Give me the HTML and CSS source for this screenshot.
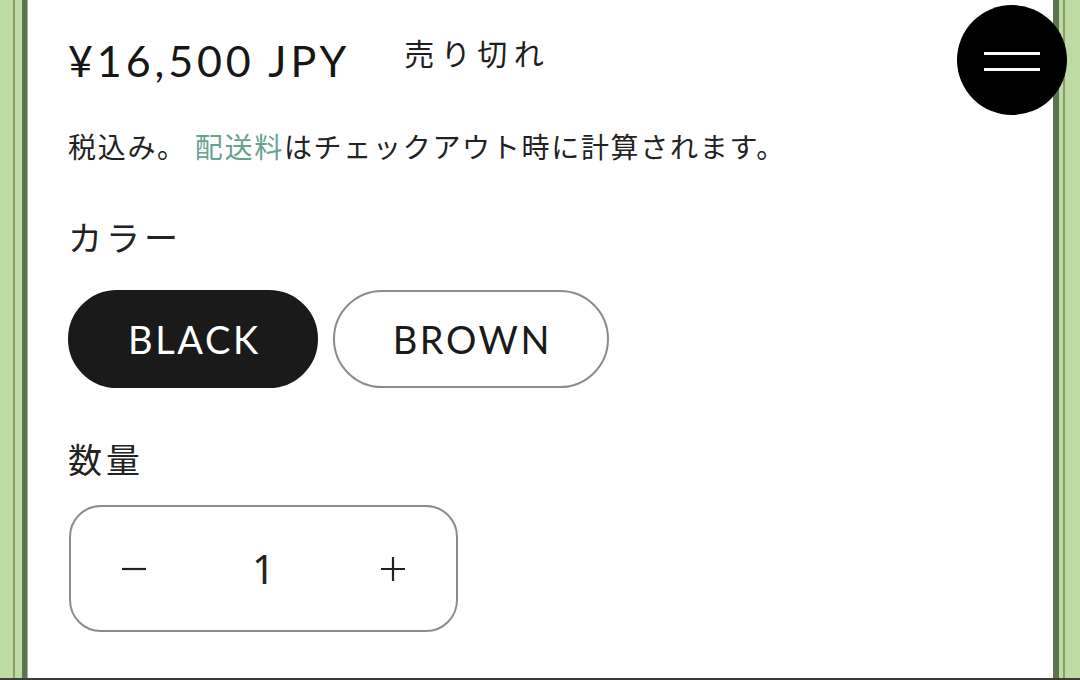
FILE: index.html
```html
<!DOCTYPE html>
<html lang="ja">
<head>
<meta charset="utf-8">
<title>Product</title>
<link rel="stylesheet" href="styles.css">
</head>
<body>
<div class="screen">
  <div class="edge edge-left"></div>
  <main class="page">
    <div class="price-row">
      <span class="price">¥16,500 JPY</span>
      <span class="badge">売り切れ</span>
    </div>
    <p class="tax">税込み。 <a class="tax-link" href="#">配送料</a>はチェックアウト時に計算されます。</p>

    <div class="label">カラー</div>
    <div class="swatches">
      <button class="pill pill-active">BLACK</button>
      <button class="pill">BROWN</button>
    </div>

    <div class="label label-qty">数量</div>
    <div class="qty">
      <button class="qty-btn" aria-label="減らす">
        <svg width="26" height="26" viewBox="0 0 26 26"><path d="M1 13h24" stroke="#222" stroke-width="2.2" fill="none"/></svg>
      </button>
      <span class="qty-value">1</span>
      <button class="qty-btn" aria-label="増やす">
        <svg width="26" height="26" viewBox="0 0 26 26"><path d="M1 13h24M13 1v24" stroke="#222" stroke-width="2.2" fill="none"/></svg>
      </button>
    </div>
  </main>
  <div class="edge edge-right"></div>
  <button class="menu-fab" aria-label="メニュー">
    <svg width="110" height="110" viewBox="0 0 110 110"><path d="M27 48.5h56M27 64.5h56" stroke="#fff" stroke-width="3" fill="none"/></svg>
  </button>
</div>
<div class="bottom-bar"></div>
</body>
</html>
```

FILE: styles.css
```css
* { box-sizing: border-box; }

html, body {
  margin: 0;
  padding: 0;
  background: #ffffff;
}

body {
  width: 1080px;
  height: 680px;
  overflow: hidden;
  font-family: "Lato", "Noto Sans CJK JP", sans-serif;
  color: #1e1e1e;
}

.screen {
  position: relative;
  display: flex;
  height: 678px;
}

.edge {
  flex: 0 0 auto;
  height: 100%;
}

.edge-left {
  width: 28px;
  background: linear-gradient(to right,
    #bcdca4 0, #bcdca4 13px,
    #8c9b67 13px, #8c9b67 15px,
    #bcdca4 15px, #bcdca4 22px,
    #5d7453 22px, #5d7453 27px,
    #9fb690 27px, #9fb690 28px);
}

.edge-right {
  width: 27px;
  background: linear-gradient(to right,
    #5d7453 0, #5d7453 6px,
    #bcdca4 6px, #bcdca4 10px,
    #8c9b67 10px, #8c9b67 12px,
    #bcdca4 12px, #bcdca4 27px);
}

.page {
  flex: 1 1 auto;
  background: #ffffff;
  padding: 36px 0 0 40px;
}

.price-row {
  display: flex;
  align-items: flex-start;
  height: 50px;
}

.price {
  font-family: "Lato", sans-serif;
  font-weight: 400;
  font-size: 43px;
  line-height: 50px;
  letter-spacing: 3.9px;
  color: #161616;
}

.badge {
  margin-left: 54px;
  margin-top: 1px;
  font-family: "Noto Sans CJK JP", sans-serif;
  font-size: 30px;
  line-height: 30px;
  letter-spacing: 6.5px;
  color: #1e1e1e;
}

.tax {
  margin: 46px 0 0;
  font-family: "Noto Sans CJK JP", sans-serif;
  font-size: 28px;
  line-height: 28px;
  letter-spacing: 1.7px;
  color: #222;
}

.tax-link {
  color: #67a291;
  text-decoration: none;
}

.label {
  margin-top: 60px;
  font-family: "Noto Sans CJK JP", sans-serif;
  font-size: 34px;
  line-height: 33px;
  letter-spacing: 4px;
  color: #222;
}

.swatches {
  display: flex;
  gap: 15px;
  margin-top: 37px;
}

.pill {
  height: 98px;
  padding: 0 55px 0 58px;
  border: 2px solid #8c8c8c;
  border-radius: 49px;
  background: #fff;
  font-family: "Lato", sans-serif;
  font-size: 38px;
  letter-spacing: 2.6px;
  color: #1a1a1a;
  cursor: pointer;
}

.pill-active {
  background: #1a1a1a;
  border-color: #1a1a1a;
  color: #fff;
}

.label-qty {
  margin-top: 54px;
}

.qty {
  display: flex;
  align-items: center;
  width: 389px;
  height: 127px;
  margin: 30px 0 0 1px;
  border: 2px solid #8c8c8c;
  border-radius: 32px;
}

.qty-btn {
  display: flex;
  align-items: center;
  justify-content: center;
  width: 126px;
  height: 100%;
  padding: 0;
  border: 0;
  background: transparent;
  cursor: pointer;
}

.qty-value {
  flex: 1 1 auto;
  text-align: center;
  font-family: "Noto Sans", sans-serif;
  font-size: 40px;
  color: #222;
}

.menu-fab {
  position: absolute;
  left: 957px;
  top: 5px;
  width: 110px;
  height: 110px;
  padding: 0;
  border: 0;
  border-radius: 50%;
  background: #000;
  cursor: pointer;
}

.menu-fab svg {
  display: block;
}

.bottom-bar {
  height: 2px;
  background: #3c3c3c;
}
```
